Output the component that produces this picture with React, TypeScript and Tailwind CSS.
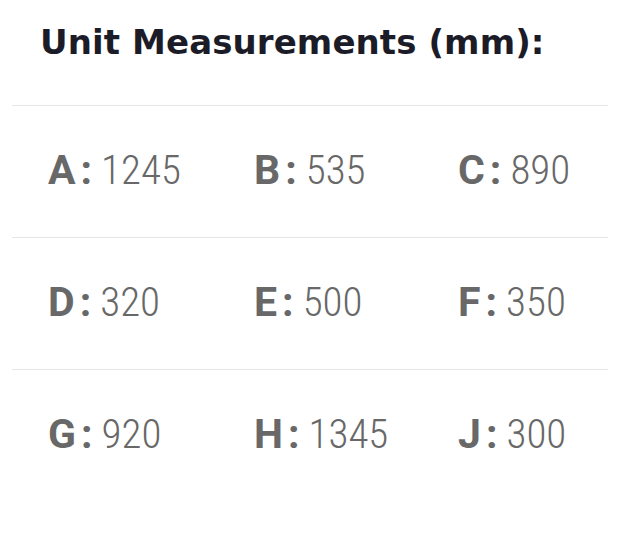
import React from "react";

const rows = [
  [["A", "1245"], ["B", "535"], ["C", "890"]],
  [["D", "320"], ["E", "500"], ["F", "350"]],
  [["G", "920"], ["H", "1345"], ["J", "300"]],
];

export default function App() {
  return (
    <div className="w-[620px] h-[550px] bg-white">
      <div className="pt-[20px] pl-[40px] h-[105px] box-border">
        <h2 className="font-['DejaVu_Sans',sans-serif] text-[34px] font-bold text-[#1c1c28] leading-[44px] tracking-[0.1px]">
          Unit Measurements (mm):
        </h2>
      </div>
      <div className="mx-[12px] w-[596px]">
        {rows.map((row, i) => (
          <div
            key={i}
            className="grid h-[132px] grid-cols-[206px_204px_1fr] items-center border-t border-[#e6e6e6] pl-[36px] pb-[2px]"
          >
            {row.map(([k, v]) => (
              <div key={k} className="flex items-baseline text-[41px] leading-none text-[#686868]">
                <span className="font-['Roboto',sans-serif] font-bold">{k}</span>
                <span className="ml-[5px] mr-[9px] font-['Roboto',sans-serif] font-bold">:</span>
                <span className="font-['Roboto_Condensed',sans-serif] font-light">{v}</span>
              </div>
            ))}
          </div>
        ))}
      </div>
    </div>
  );
}
